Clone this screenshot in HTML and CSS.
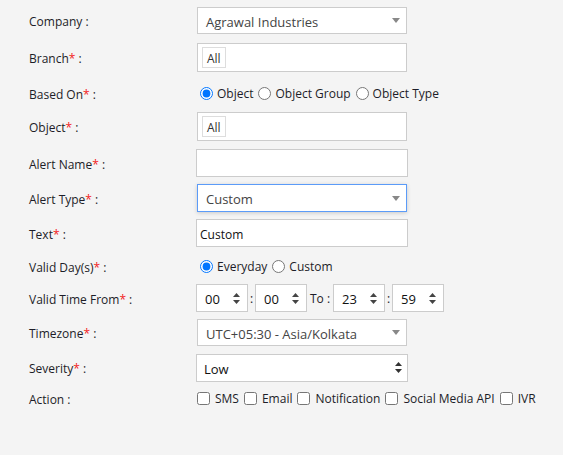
FILE: index.html
```html
<!DOCTYPE html>
<html>
<head>
<meta charset="utf-8">
<link rel="stylesheet" href="styles.css">
</head>
<body>
<div class="form">
  <div class="label">Company :</div>
  <div class="field">
    <div class="select s2"><span class="val">Agrawal Industries</span><svg class="caret" width="8" height="5" viewBox="0 0 8 5"><path d="M0 0h8L4 5z"/></svg></div>
  </div>

  <div class="label">Branch<span class="req">*</span> :</div>
  <div class="field">
    <div class="multi s2"><span class="tag">All</span></div>
  </div>

  <div class="label">Based On<span class="req">*</span> :</div>
  <div class="field options">
    <label class="opt"><input type="radio" name="based" checked>Object</label>
    <label class="opt"><input type="radio" name="based">Object Group</label>
    <label class="opt"><input type="radio" name="based">Object Type</label>
  </div>

  <div class="label">Object<span class="req">*</span> :</div>
  <div class="field">
    <div class="multi s2"><span class="tag">All</span></div>
  </div>

  <div class="label">Alert Name<span class="req">*</span> :</div>
  <div class="field">
    <div class="input"></div>
  </div>

  <div class="label">Alert Type<span class="req">*</span> :</div>
  <div class="field">
    <div class="select s2 focus"><span class="val">Custom</span><svg class="caret" width="8" height="5" viewBox="0 0 8 5"><path d="M0 0h8L4 5z"/></svg></div>
  </div>

  <div class="label">Text<span class="req">*</span> :</div>
  <div class="field">
    <div class="input"><span class="txt">Custom</span></div>
  </div>

  <div class="label">Valid Day(s)<span class="req">*</span> :</div>
  <div class="field options">
    <label class="opt"><input type="radio" name="days" checked>Everyday</label>
    <label class="opt"><input type="radio" name="days">Custom</label>
  </div>

  <div class="label">Valid Time From<span class="req">*</span> :</div>
  <div class="field time">
    <div class="spin"><span>00</span><svg width="7" height="11" viewBox="0 0 7 11"><path d="M3.5 0L7 4H0zM0 7h7l-3.5 4z"/></svg></div>
    <span class="sep">:</span>
    <div class="spin"><span>00</span><svg width="7" height="11" viewBox="0 0 7 11"><path d="M3.5 0L7 4H0zM0 7h7l-3.5 4z"/></svg></div>
    <span class="to">To :</span>
    <div class="spin"><span>23</span><svg width="7" height="11" viewBox="0 0 7 11"><path d="M3.5 0L7 4H0zM0 7h7l-3.5 4z"/></svg></div>
    <span class="sep">:</span>
    <div class="spin"><span>59</span><svg width="7" height="11" viewBox="0 0 7 11"><path d="M3.5 0L7 4H0zM0 7h7l-3.5 4z"/></svg></div>
  </div>

  <div class="label">Timezone<span class="req">*</span> :</div>
  <div class="field">
    <div class="select s2"><span class="val">UTC+05:30 - Asia/Kolkata</span><svg class="caret" width="8" height="5" viewBox="0 0 8 5"><path d="M0 0h8L4 5z"/></svg></div>
  </div>

  <div class="label">Severity<span class="req">*</span> :</div>
  <div class="field">
    <div class="select native"><span class="val">Low</span><svg class="updown" width="7" height="11" viewBox="0 0 7 11"><path d="M3.5 0L7 4H0zM0 7h7l-3.5 4z"/></svg></div>
  </div>

  <div class="label">Action :</div>
  <div class="field options checks">
    <label class="opt"><input type="checkbox">SMS</label>
    <label class="opt"><input type="checkbox">Email</label>
    <label class="opt"><input type="checkbox">Notification</label>
    <label class="opt"><input type="checkbox">Social Media API</label>
    <label class="opt"><input type="checkbox">IVR</label>
  </div>
</div>
</body>
</html>
```
FILE: styles.css
```css
html, body {
  margin: 0;
  background: #f4f4f4;
  font-family: "Open Sans", "Liberation Sans", sans-serif;
  color: #222;
}

.form {
  display: grid;
  grid-template-columns: 167px 1fr;
  grid-template-rows: 37px 37px 34px 33px 40px 30px 40px 26px 38px 31px 39px 22px;
  align-items: center;
  padding: 2px 0 0 29px;
}

.label {
  font-size: 12px;
  color: #1d1d28;
  white-space: nowrap;
  padding-top: 2px;
}

.req {
  color: #f21b1b;
}

.field {
  display: flex;
  align-items: center;
}

.select,
.multi,
.input {
  box-sizing: border-box;
  width: 212px;
  height: 28px;
  background: #fff;
  border: 1px solid #ccc;
  display: flex;
  align-items: center;
}

.s2 {
  width: 210px;
  margin-left: 1px;
  height: 27px;
}

.multi {
  height: 29px;
  padding-left: 4px;
}

.select .val {
  flex: 1;
  font-size: 13px;
  color: #444;
  padding: 2px 0 0 8px;
}

.select.native .val {
  padding-left: 7px;
  color: #111;
}

.caret {
  fill: #888;
  margin-right: 6px;
}

.updown {
  fill: #333;
  margin-right: 5px;
}

.focus {
  height: 28px;
  border-color: #5b9bf8;
  box-shadow: 0 1px 4px rgba(0, 0, 0, 0.18);
}

.tag {
  box-sizing: border-box;
  height: 21px;
  padding: 1px 4px 0 4px;
  border: 1px solid #ddd;
  font-size: 12px;
  line-height: 19px;
  color: #333;
}

.input .txt {
  font-size: 12px;
  color: #111;
  padding: 2px 0 0 3px;
}

.options {
  font-size: 12px;
  color: #1d1d28;
  padding-top: 1px;
}

.opt {
  display: flex;
  align-items: center;
  white-space: nowrap;
}

.opt input {
  margin: 0 4px 0 5px;
  width: 13px;
  height: 13px;
}

.opt:first-child input {
  margin-left: 4px;
}

.checks .opt input {
  margin: 0 5px 0 1px;
}

.checks .opt {
  margin-right: 4px;
}

.time {
  font-size: 12px;
  color: #1d1d28;
}

.spin {
  box-sizing: border-box;
  width: 52px;
  height: 28px;
  background: #fff;
  border: 1px solid #ccc;
  display: flex;
  align-items: center;
  justify-content: space-between;
  padding: 1px 7px 0 8px;
  font-size: 13px;
  color: #111;
}

.spin svg {
  fill: #444;
}

.sep {
  width: 7px;
  text-align: center;
}

.to {
  margin: 0 3px 0 3px;
}
```
